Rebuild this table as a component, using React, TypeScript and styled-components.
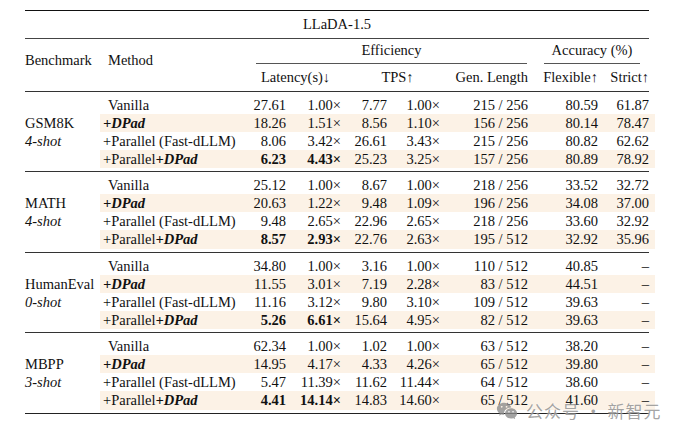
import React from "react";
import styled, { createGlobalStyle } from "styled-components";
import { RiWechatFill } from "react-icons/ri";

const GlobalStyle = createGlobalStyle`
  html, body { margin: 0; padding: 0; background: #fff; }
  body {
    font-family: "Liberation Serif", "Times New Roman", "DejaVu Serif", serif;
    color: #111;
  }
`;

const ROW_COLS = "150px 36px 55px 46px 53px 88px 70px 51px";

const Page = styled.div`
  position: relative;
  width: 681px;
  height: 435px;
  padding: 10px 0 0 25px;
  box-sizing: border-box;
  overflow: hidden;
`;

const Table = styled.div`
  width: 624px;
  border-top: 1.5px solid #111;
  border-bottom: 1.5px solid #222;
  font-size: 14.5px;
  white-space: nowrap;
`;

const Title = styled.div`
  height: 26.5px;
  display: flex;
  align-items: center;
  justify-content: center;
  border-bottom: 1px solid #444;
`;

const HeadGrid = styled.div`
  display: grid;
  grid-template-columns: 75px ${ROW_COLS};
  grid-template-rows: 25px 27px;
`;

const HeadLabel = styled.div<{ $col: number; $pl?: number }>`
  grid-column: ${(p) => p.$col};
  grid-row: 1 / 3;
  display: flex;
  align-items: center;
  padding: 0 0 8px ${(p) => p.$pl ?? 0}px;
`;

const GroupHead = styled.div<{ $cols: string; $ml: number; $mr: number }>`
  grid-column: ${(p) => p.$cols};
  grid-row: 1;
  display: flex;
  align-items: center;
  justify-content: center;
  margin: 0 ${(p) => p.$mr}px 0 ${(p) => p.$ml}px;
  border-bottom: 1px solid #555;
`;

const SubHead = styled.div<{ $cols: string; $align?: "center" | "right"; $pl?: number }>`
  grid-column: ${(p) => p.$cols};
  grid-row: 2;
  display: flex;
  align-items: center;
  justify-content: ${(p) => (p.$align === "right" ? "flex-end" : "center")};
  padding-left: ${(p) => p.$pl ?? 0}px;
`;

const Section = styled.div`
  display: grid;
  grid-template-columns: 75px 1fr;
  border-top: 1px solid #333;
  padding: 4px 0 3px;
`;

const Bench = styled.div`
  align-self: center;
  display: flex;
  flex-direction: column;
  line-height: 18.125px;
`;

const Shot = styled.span`
  font-style: italic;
`;

const Rows = styled.div`
  display: flex;
  flex-direction: column;
`;

const Row = styled.div<{ $hl?: boolean }>`
  display: grid;
  grid-template-columns: ${ROW_COLS};
  height: 18.125px;
  line-height: 18.125px;
  margin-right: -6px;
  padding-right: 6px;
  background: ${(p) => (p.$hl ? "#fcf2e6" : "transparent")};
`;

const Method = styled.span<{ $indent?: boolean }>`
  padding-left: ${(p) => (p.$indent ? 8 : 3)}px;
`;

const Em = styled.span`
  font-weight: 700;
  font-style: italic;
`;

const Num = styled.span<{ $b?: boolean }>`
  text-align: right;
  font-weight: ${(p) => (p.$b ? 700 : 400)};
`;

const Watermark = styled.div`
  position: absolute;
  left: 496px;
  top: 398px;
  display: flex;
  align-items: center;
  gap: 8px;
  color: rgba(140, 140, 140, 0.8);
  font-family: "Noto Sans CJK SC", "Noto Sans", sans-serif;
  font-size: 17px;
  letter-spacing: 1px;
  text-shadow: 0 0 2px rgba(255, 255, 255, 0.8);
`;

type R = {
  m: "v" | "d" | "p" | "pd";
  cells: string[];
  bold?: number[];
};

type S = { name: string; shot: string; rows: R[] };

const data: S[] = [
  {
    name: "GSM8K",
    shot: "4-shot",
    rows: [
      { m: "v", cells: ["27.61", "1.00×", "7.77", "1.00×", "215 / 256", "80.59", "61.87"] },
      { m: "d", cells: ["18.26", "1.51×", "8.56", "1.10×", "156 / 256", "80.14", "78.47"] },
      { m: "p", cells: ["8.06", "3.42×", "26.61", "3.43×", "215 / 256", "80.82", "62.62"] },
      { m: "pd", cells: ["6.23", "4.43×", "25.23", "3.25×", "157 / 256", "80.89", "78.92"], bold: [0, 1] },
    ],
  },
  {
    name: "MATH",
    shot: "4-shot",
    rows: [
      { m: "v", cells: ["25.12", "1.00×", "8.67", "1.00×", "218 / 256", "33.52", "32.72"] },
      { m: "d", cells: ["20.63", "1.22×", "9.48", "1.09×", "196 / 256", "34.08", "37.00"] },
      { m: "p", cells: ["9.48", "2.65×", "22.96", "2.65×", "218 / 256", "33.60", "32.92"] },
      { m: "pd", cells: ["8.57", "2.93×", "22.76", "2.63×", "195 / 512", "32.92", "35.96"], bold: [0, 1] },
    ],
  },
  {
    name: "HumanEval",
    shot: "0-shot",
    rows: [
      { m: "v", cells: ["34.80", "1.00×", "3.16", "1.00×", "110 / 512", "40.85", "–"] },
      { m: "d", cells: ["11.55", "3.01×", "7.19", "2.28×", "83 / 512", "44.51", "–"] },
      { m: "p", cells: ["11.16", "3.12×", "9.80", "3.10×", "109 / 512", "39.63", "–"] },
      { m: "pd", cells: ["5.26", "6.61×", "15.64", "4.95×", "82 / 512", "39.63", "–"], bold: [0, 1] },
    ],
  },
  {
    name: "MBPP",
    shot: "3-shot",
    rows: [
      { m: "v", cells: ["62.34", "1.00×", "1.02", "1.00×", "63 / 512", "38.20", "–"] },
      { m: "d", cells: ["14.95", "4.17×", "4.33", "4.26×", "65 / 512", "39.80", "–"] },
      { m: "p", cells: ["5.47", "11.39×", "11.62", "11.44×", "64 / 512", "38.60", "–"] },
      { m: "pd", cells: ["4.41", "14.14×", "14.83", "14.60×", "65 / 512", "41.60", "–"], bold: [0, 1] },
    ],
  },
];

function MethodLabel({ m }: { m: R["m"] }) {
  if (m === "v") return <Method $indent>Vanilla</Method>;
  if (m === "d")
    return (
      <Method>
        <Em>+DPad</Em>
      </Method>
    );
  if (m === "p") return <Method>+Parallel (Fast-dLLM)</Method>;
  return (
    <Method>
      +Parallel<Em>+DPad</Em>
    </Method>
  );
}

export default function App() {
  return (
    <>
      <GlobalStyle />
      <Page>
        <Table>
          <Title>LLaDA-1.5</Title>
          <HeadGrid>
            <HeadLabel $col={1}>Benchmark</HeadLabel>
            <HeadLabel $col={2} $pl={8}>
              Method
            </HeadLabel>
            <GroupHead $cols="3 / 8" $ml={6} $mr={1}>
              Efficiency
            </GroupHead>
            <GroupHead $cols="8 / 10" $ml={16} $mr={9}>
              Accuracy (%)
            </GroupHead>
            <SubHead $cols="3 / 5">Latency(s)↓</SubHead>
            <SubHead $cols="5 / 7" $pl={14}>
              TPS↑
            </SubHead>
            <SubHead $cols="7 / 8" $align="right">
              Gen. Length
            </SubHead>
            <SubHead $cols="8 / 9" $align="right">
              Flexible↑
            </SubHead>
            <SubHead $cols="9 / 10" $align="right">
              Strict↑
            </SubHead>
          </HeadGrid>
          {data.map((s) => (
            <Section key={s.name}>
              <Bench>
                <span>{s.name}</span>
                <Shot>{s.shot}</Shot>
              </Bench>
              <Rows>
                {s.rows.map((r, i) => (
                  <Row key={i} $hl={r.m === "d" || r.m === "pd"}>
                    <MethodLabel m={r.m} />
                    {r.cells.map((c, j) => (
                      <Num key={j} $b={r.bold?.includes(j)}>
                        {c}
                      </Num>
                    ))}
                  </Row>
                ))}
              </Rows>
            </Section>
          ))}
        </Table>
        <Watermark>
          <RiWechatFill size={22} />
          <span>公众号 · 新智元</span>
        </Watermark>
      </Page>
    </>
  );
}
